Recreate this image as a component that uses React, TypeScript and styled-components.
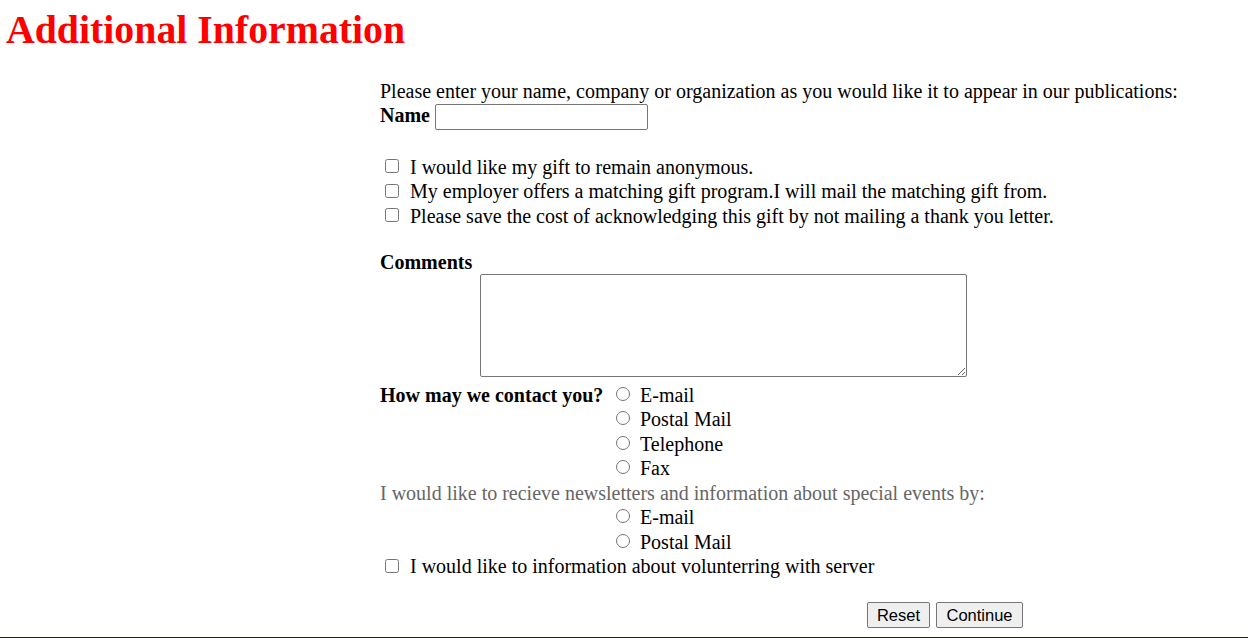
import React from "react";
import styled, { createGlobalStyle } from "styled-components";

const GlobalStyle = createGlobalStyle`
  html, body {
    margin: 0;
    padding: 0;
    background: #ffffff;
  }
  body {
    font-family: "Liberation Serif", "Times New Roman", serif;
    font-size: 20px;
    color: #000000;
  }
`;

const Page = styled.div`
  height: 638px;
  display: flex;
  flex-direction: column;
  overflow: hidden;
`;

const Title = styled.h1`
  margin: 0;
  padding: 7px 0 0 6px;
  font-size: 39.8px;
  line-height: 46px;
  font-weight: bold;
  color: #ff0000;
`;

const Form = styled.form`
  margin: 26px 0 0 0;
  padding-left: 380px;
  display: flex;
  flex-direction: column;
`;

const Line = styled.div<{ $h?: number }>`
  height: ${(p) => p.$h ?? 24.5}px;
  display: flex;
  align-items: center;
  line-height: 23px;
  white-space: nowrap;
`;

const Spacer = styled.div<{ $h: number }>`
  height: ${(p) => p.$h}px;
`;

const NameRow = styled.div`
  height: 27px;
  display: flex;
  align-items: flex-start;
  gap: 5px;
  line-height: 23px;
`;

const Label = styled.label`
  font-weight: bold;
`;

const TextInput = styled.input`
  box-sizing: border-box;
  width: 213px;
  height: 26px;
  margin: 0.5px 0 0 0;
  border: 1px solid #767676;
  border-radius: 2px;
  padding: 2px 4px;
  font-size: 16px;
  background: #ffffff;
`;

const Check = styled.input.attrs({ type: "checkbox" })`
  appearance: none;
  box-sizing: border-box;
  width: 14px;
  height: 14px;
  margin: -2px 11px 0 5px;
  border: 1px solid #767676;
  border-radius: 2.5px;
  background: #ffffff;
  flex: none;
`;

const CommentBox = styled.textarea`
  box-sizing: border-box;
  width: 487px;
  height: 103px;
  margin: 0 0 0 100px;
  border: 1px solid #767676;
  border-radius: 2px;
  display: block;
  font-family: "Liberation Mono", monospace;
  font-size: 16px;
`;

const ContactGrid = styled.div`
  margin-top: 6px;
  display: grid;
  grid-template-columns: 236px auto;
  grid-auto-rows: 24.5px;
  align-items: center;
`;

const GridLabel = styled.div`
  font-weight: bold;
  line-height: 23px;
  white-space: nowrap;
`;

const GridNote = styled.div`
  grid-column: 1 / span 2;
  color: #666666;
  line-height: 23px;
  white-space: nowrap;
`;

const RadioItem = styled.label`
  grid-column: 2;
  display: flex;
  align-items: center;
  gap: 10px;
  line-height: 23px;
  white-space: nowrap;
`;

const Radio = styled.input.attrs({ type: "radio" })`
  appearance: none;
  box-sizing: border-box;
  width: 14px;
  height: 14px;
  margin: -3px 0 0 0;
  border: 1px solid #767676;
  border-radius: 50%;
  background: #ffffff;
  flex: none;
`;

const Buttons = styled.div`
  margin-top: 23px;
  padding-left: 487px;
  display: flex;
  gap: 6px;
`;

const Button = styled.button<{ $w: number }>`
  box-sizing: border-box;
  width: ${(p) => p.$w}px;
  height: 26px;
  padding: 0;
  border: 1px solid #767676;
  border-radius: 2px;
  background: #efefef;
  color: #000000;
  font-family: "Liberation Sans", Arial, sans-serif;
  font-size: 16.5px;
`;

const Footer = styled.div`
  margin-top: auto;
  height: 0;
  border-top: 1px solid #24201a;
`;

export default function App() {
  return (
    <>
      <GlobalStyle />
      <Page>
        <Title>Additional Information</Title>
        <Form onSubmit={(e) => e.preventDefault()}>
          <Line>
            Please enter your name, company or organization as you would like it to appear in our publications:
          </Line>
          <NameRow>
            <Label htmlFor="name">Name</Label>
            <TextInput id="name" type="text" />
          </NameRow>
          <Spacer $h={24.5} />
          <Line>
            <Check />I would like my gift to remain anonymous.
          </Line>
          <Line>
            <Check />My employer offers a matching gift program.I will mail the matching gift from.
          </Line>
          <Line>
            <Check />Please save the cost of acknowledging this gift by not mailing a thank you letter.
          </Line>
          <Spacer $h={22.5} />
          <Line $h={23}>
            <Label>Comments</Label>
          </Line>
          <CommentBox />
          <ContactGrid>
            <GridLabel>How may we contact you?</GridLabel>
            <RadioItem>
              <Radio name="contact" />
              E-mail
            </RadioItem>
            <RadioItem>
              <Radio name="contact" />
              Postal Mail
            </RadioItem>
            <RadioItem>
              <Radio name="contact" />
              Telephone
            </RadioItem>
            <RadioItem>
              <Radio name="contact" />
              Fax
            </RadioItem>
            <GridNote>I would like to recieve newsletters and information about special events by:</GridNote>
            <RadioItem>
              <Radio name="news" />
              E-mail
            </RadioItem>
            <RadioItem>
              <Radio name="news" />
              Postal Mail
            </RadioItem>
          </ContactGrid>
          <Line>
            <Check />I would like to information about volunterring with server
          </Line>
          <Buttons>
            <Button type="reset" $w={63}>Reset</Button>
            <Button type="submit" $w={87}>Continue</Button>
          </Buttons>
        </Form>
        <Footer />
      </Page>
    </>
  );
}
